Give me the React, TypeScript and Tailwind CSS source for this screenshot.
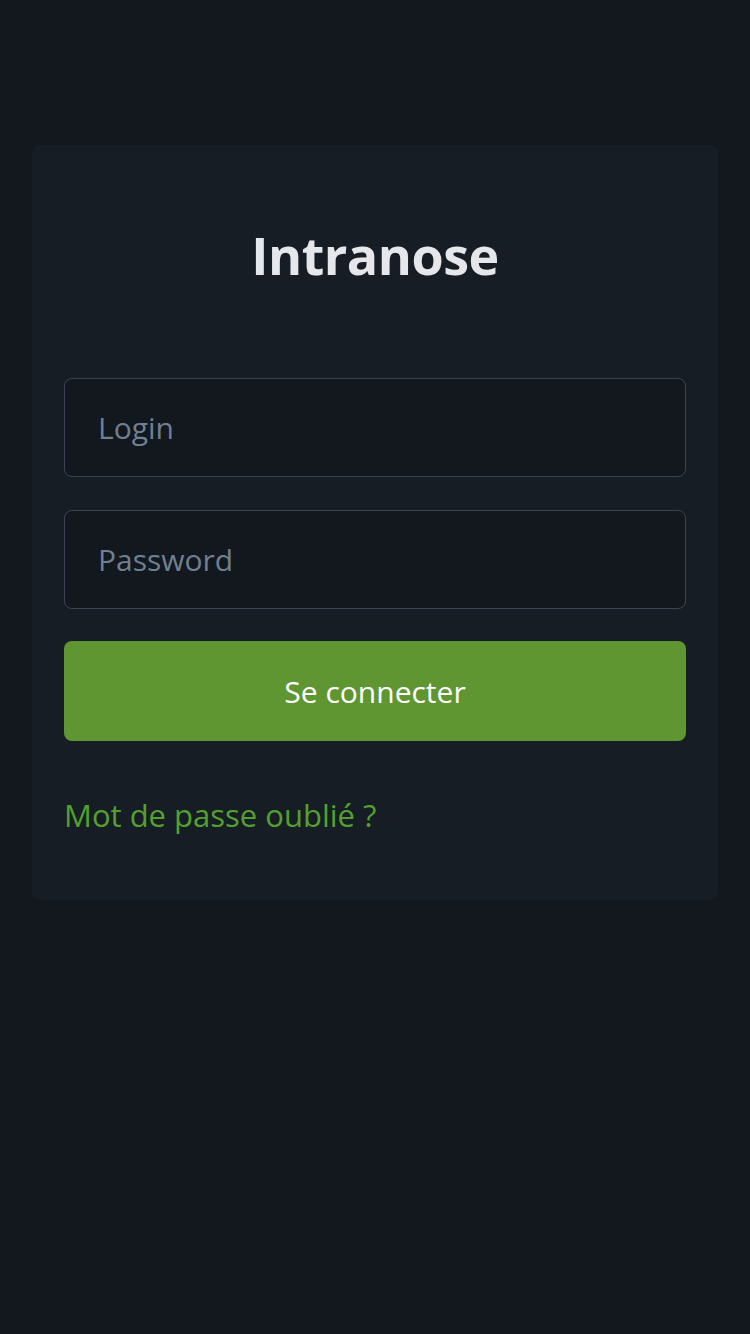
export default function App() {
  return (
    <div
      className="min-h-[1334px] w-full bg-[#13171e] px-8 pt-[145px]"
      style={{ fontFamily: '"Open Sans", "Noto Sans", sans-serif' }}
    >
      <div className="rounded-lg bg-[#171d25] px-8 pt-[70px] pb-[64px]">
        <h1 className="text-center text-[52px] font-bold leading-[80px] tracking-[-0.5px] text-[#e5e7eb]">
          Intranose
        </h1>

        <form className="mt-[83px] flex flex-col" onSubmit={(e) => e.preventDefault()}>
          <input
            type="text"
            placeholder="Login"
            className="h-[99px] w-full rounded-lg border border-[#3b4452] bg-[#13171e] px-[33px] text-[30px] text-[#e5e7eb] placeholder:text-[#6e8091] outline-none"
          />
          <input
            type="password"
            placeholder="Password"
            className="mt-[33px] h-[99px] w-full rounded-lg border border-[#3b4452] bg-[#13171e] px-[33px] text-[30px] text-[#e5e7eb] placeholder:text-[#6e8091] outline-none"
          />
          <button
            type="submit"
            className="mt-[32px] h-[100px] w-full rounded-lg bg-[#5f9632] text-[30px] text-white"
          >
            Se connecter
          </button>
        </form>

        <a href="#" className="mt-[53px] block text-[31px] leading-[42px] text-[#54a02f]">
          Mot de passe oublié ?
        </a>
      </div>
    </div>
  );
}
